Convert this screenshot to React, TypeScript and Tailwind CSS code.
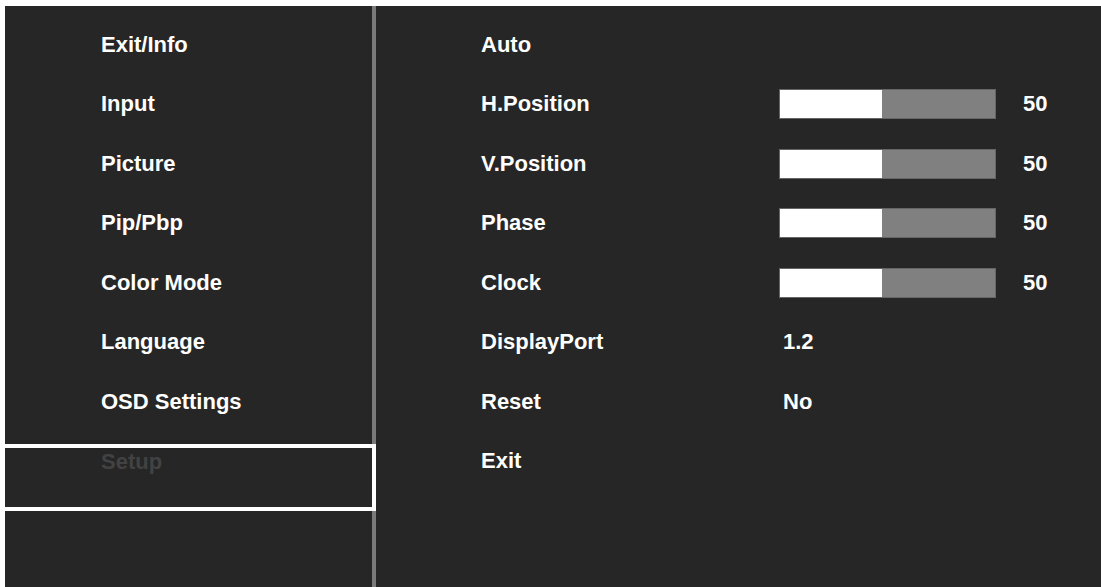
import React from "react";

type Row = {
  label: string;
  slider?: number;
  value?: string;
};

const MENU = [
  "Exit/Info",
  "Input",
  "Picture",
  "Pip/Pbp",
  "Color Mode",
  "Language",
  "OSD Settings",
  "Setup",
];

const ACTIVE = "Setup";

const SETUP_ROWS: Row[] = [
  { label: "Auto" },
  { label: "H.Position", slider: 50 },
  { label: "V.Position", slider: 50 },
  { label: "Phase", slider: 50 },
  { label: "Clock", slider: 50 },
  { label: "DisplayPort", value: "1.2" },
  { label: "Reset", value: "No" },
  { label: "Exit" },
];

function Slider({ value }: { value: number }) {
  return (
    <div className="flex items-center">
      <div className="flex h-[30px] w-[217px] border border-[#666666] bg-[#808080]">
        <div className="h-full w-[47.5%] bg-white" />
      </div>
      <span className="ml-[27px]">{value}</span>
    </div>
  );
}

export default function App() {
  return (
    <div className="h-[587px] w-[1101px] overflow-hidden bg-white pl-[5px] pt-[6px] font-['Liberation_Sans',Arial,sans-serif] text-[22px] font-bold leading-[24px] text-white">
      <div className="flex h-full bg-[#262626]">
        {/* main menu */}
        <div className="w-[371px] shrink-0 border-r-4 border-[#7a7a7a] pt-[9px]">
          {MENU.map((item) =>
            item === ACTIVE ? (
              <div
                key={item}
                className="relative z-10 -mr-1 mt-[12.5px] h-[67px] border-y-4 border-r-4 border-white pl-[96px] pt-[1.5px] text-[#424242]"
              >
                {item}
              </div>
            ) : (
              <div key={item} className="flex h-[59.5px] items-center pl-[96px]">
                {item}
              </div>
            )
          )}
        </div>

        {/* setup submenu */}
        <div className="flex-1 pl-[105px] pt-[9px]">
          {SETUP_ROWS.map((row) => (
            <div key={row.label} className="flex h-[59.5px] items-center">
              <div className="w-[298px] shrink-0">{row.label}</div>
              {row.slider !== undefined && <Slider value={row.slider} />}
              {row.value && <div className="pl-[4px]">{row.value}</div>}
            </div>
          ))}
        </div>
      </div>
    </div>
  );
}
